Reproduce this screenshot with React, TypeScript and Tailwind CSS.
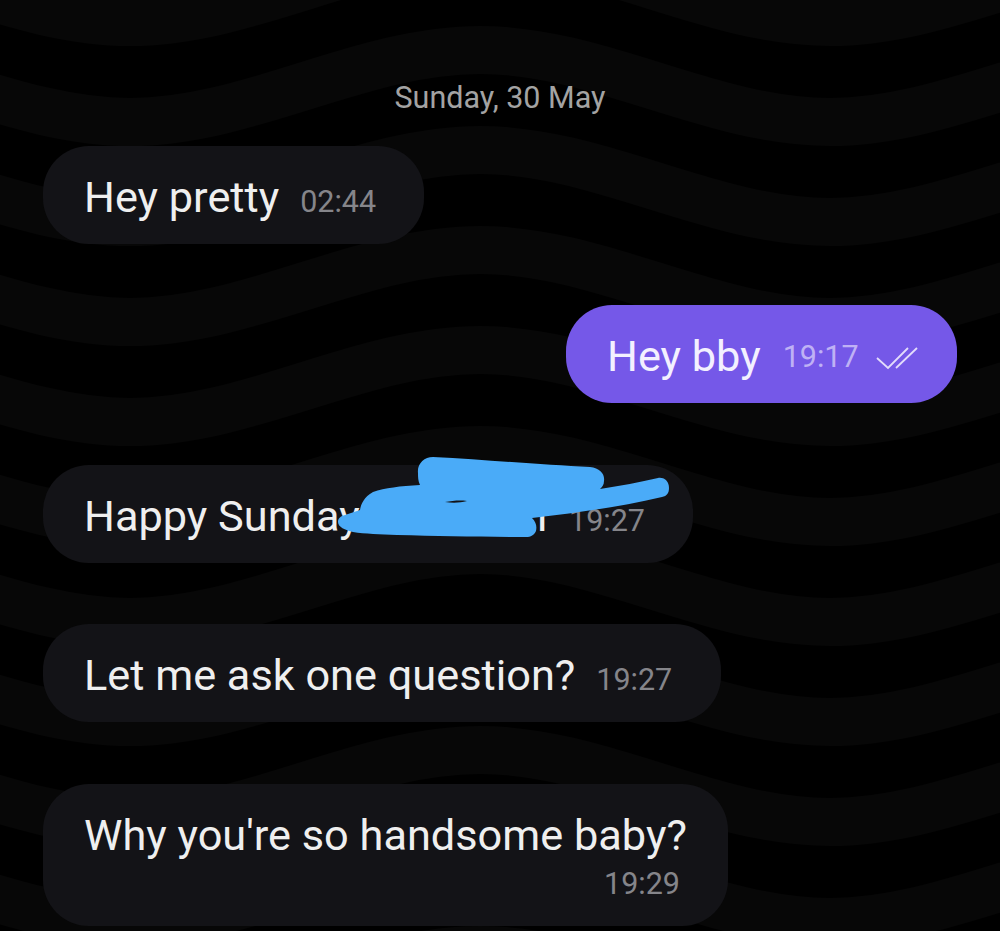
import React from 'react';

const bandOffsets = [-114, -14, 86, 186, 286, 386, 486, 586, 686, 786, 886, 986];

// one wavy stripe of the wallpaper, centred on y
const wavePath = (y: number) => {
  const a = 36;
  return `M-220 ${y - a} C-100 ${y - a} 10 ${y + a} 130 ${y + a} S360 ${y - a} 480 ${y - a} S710 ${y + a} 830 ${y + a} S1060 ${y - a} 1180 ${y - a}`;
};

const Wallpaper = () => (
  <svg className="absolute inset-0" width="1000" height="931" viewBox="0 0 1000 931" fill="none">
    {bandOffsets.map(y => (
      <path key={y} d={wavePath(y)} stroke="#070707" strokeWidth="48" />
    ))}
  </svg>
);

const Scribble = () => (
  <svg className="absolute left-[287px] top-[-15px]" width="345" height="95" viewBox="330 450 345 95">
    <path
      fill="#4aabf8"
      fillRule="evenodd"
      d="M418 473C417 464 424 457 433 457C490 460 545 465 590 467C600 468 605 474 604 481C604 485 602 487 600 489C620 486 640 482 658 478C665 477 669 482 669 488C669 493 667 496 662 497C620 507 575 513 532 518C536 522 537 526 536 531C534 535 531 537 526 537C480 537 440 536 397 535C380 534 365 534 353 532C345 530 338 527 338 522C338 518 341 516 345 515L360 510C361 504 364 497 373 492C385 488 400 486 420 485C418 481 418 477 418 473ZM445 502C452 503 460 503 467 501C459 500 452 501 445 502Z"
    />
  </svg>
);

const DoubleCheck = () => (
  <svg className="mt-[2px] ml-[17px]" width="42" height="24" viewBox="0 0 42 24" fill="none" stroke="#e3dcfb" strokeWidth="1.8">
    <path d="M1 12L12 22L32 2" />
    <path d="M20 22L41 2" />
  </svg>
);

const Bubble = ({
  text,
  time,
  className,
  children,
}: {
  text: string;
  time: string;
  className: string;
  children?: React.ReactNode;
}) => (
  <div className={`relative flex h-[98px] items-baseline rounded-[46px] pt-[28px] pl-[41px] whitespace-nowrap ${className}`}>
    <span className="text-[43.3px] leading-[48px] text-[#efefef]">{text}</span>
    {children}
    <span className="ml-[21px] text-[30.5px] leading-[48px] text-[#85858a]">{time}</span>
  </div>
);

export default function App() {
  return (
    <div className="relative h-[931px] w-[1000px] overflow-hidden bg-black font-['Roboto',sans-serif]">
      <Wallpaper />
      <div className="relative flex flex-col pt-[79px]">
        <div className="text-center text-[30.5px] leading-[38px] text-[#a3a3a3]">Sunday, 30 May</div>

        <div className="mt-[29px] ml-[43px] w-[381px]">
          <Bubble text="Hey pretty" time="02:44" className="bg-[#131317]" />
        </div>

        <div className="mt-[61px] ml-[566px] flex h-[98px] w-[391px] items-center rounded-[46px] bg-[#7558e8] pt-[5px] pl-[41px] whitespace-nowrap">
          <span className="text-[43.3px] leading-[48px] text-[#f3f0ff]">Hey bby</span>
          <span className="ml-[22px] text-[30.5px] leading-[48px] text-[#bfb1f5]">19:17</span>
          <DoubleCheck />
        </div>

        <div className="mt-[62px] ml-[43px] w-[650px]">
          <Bubble text="Happy Sunday" time="19:27" className="pr-[48px] bg-[#131317]">
            <span className="ml-auto text-[43.3px] leading-[48px] text-[#efefef]">I</span>
            <Scribble />
          </Bubble>
        </div>

        <div className="mt-[61px] ml-[43px] w-[678px]">
          <Bubble text="Let me ask one question?" time="19:27" className="bg-[#131317]" />
        </div>

        <div className="mt-[62px] ml-[43px] flex h-[142px] w-[685px] flex-col rounded-[46px] bg-[#131317] pt-[28px] pr-[48px] pl-[41px] whitespace-nowrap">
          <span className="text-[43.3px] leading-[48px] text-[#efefef]">Why you're so handsome baby?</span>
          <span className="mt-[4px] text-right text-[30.5px] leading-[40px] text-[#85858a]">19:29</span>
        </div>
      </div>
    </div>
  );
}
